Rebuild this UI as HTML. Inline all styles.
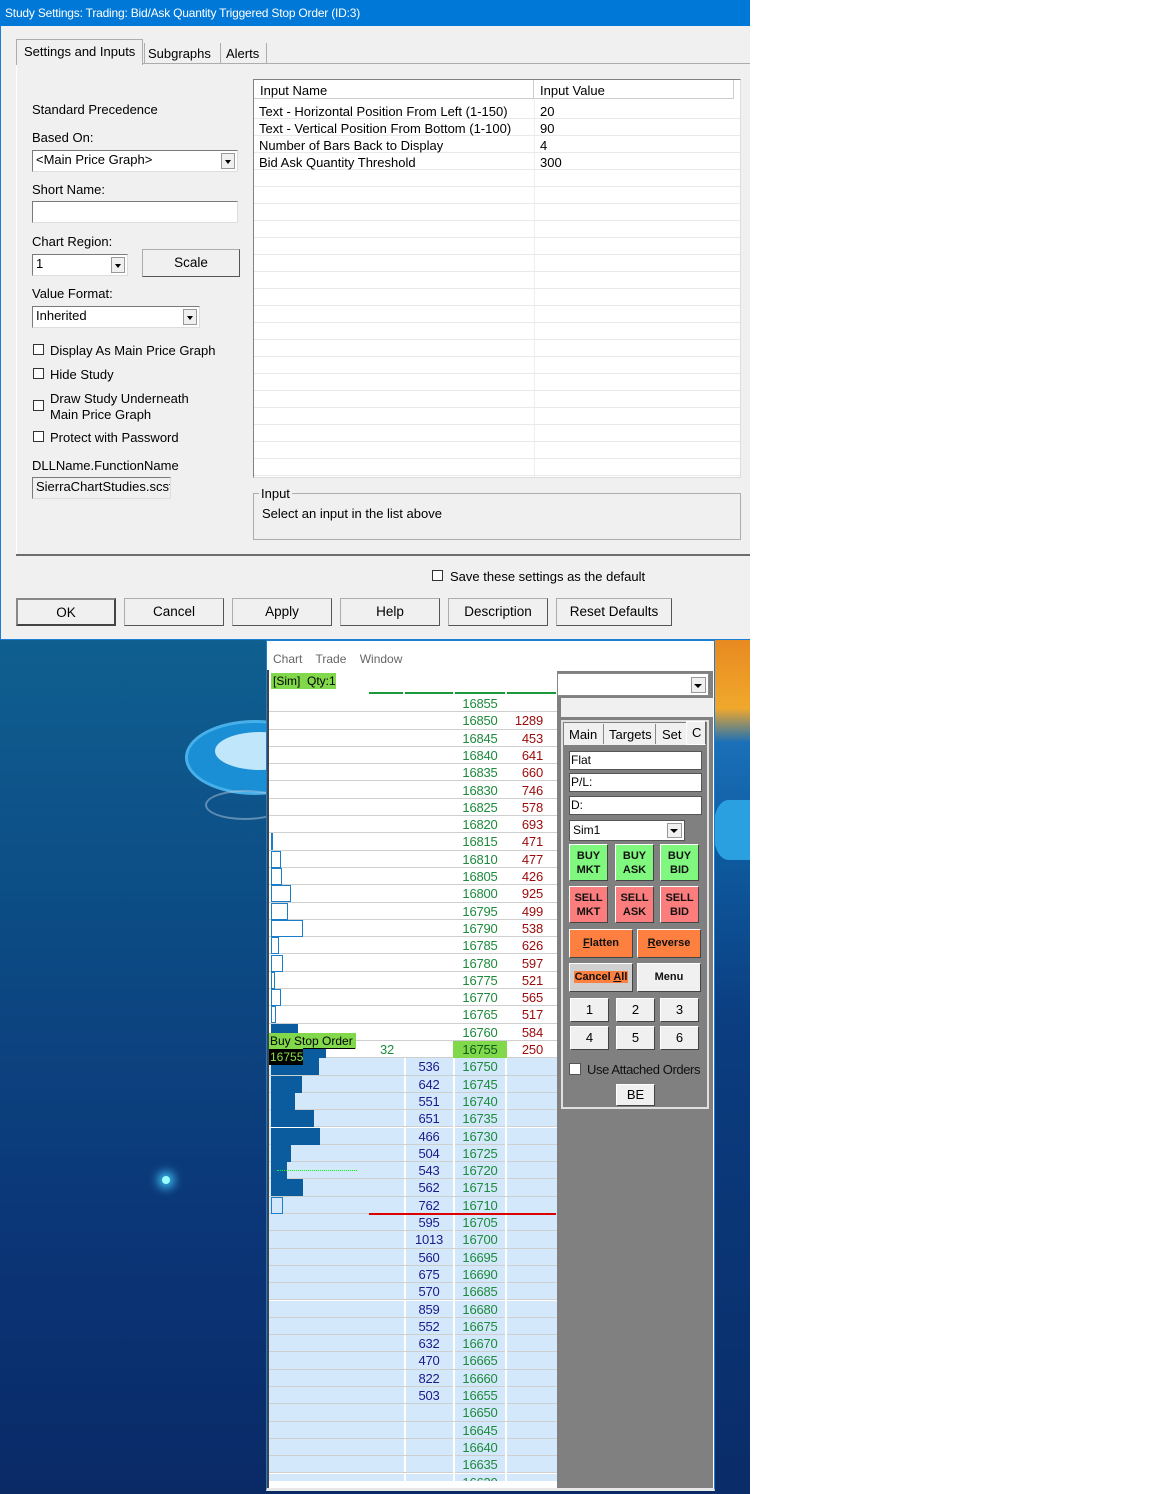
<!DOCTYPE html>
<html><head><meta charset="utf-8">
<style>
*{box-sizing:border-box;margin:0;padding:0}
body{width:1152px;height:1494px;background:#fff;position:relative;overflow:hidden;font-family:"Liberation Sans",sans-serif;}
.a{position:absolute}
.dlg{left:0;top:0;width:750px;height:640px;background:#f0f0f0;border-left:1px solid #1a7fd4;border-bottom:1px solid #1a7fd4}
.title{left:0;top:0;width:750px;height:26px;background:#0078d7;color:#fff;font-size:12px;line-height:26px;padding-left:5px;letter-spacing:-0.2px}
.t{font-size:13px;color:#000;letter-spacing:0;white-space:nowrap}
.cb{width:11px;height:11px;border:1px solid #333;background:#fff}
.btn{height:28px;border:1px solid #adadad;border-right-color:#555;border-bottom-color:#555;background:#f0f0f0;font-size:13.5px;text-align:center;line-height:26px}
.inp{background:#fff;border:1px solid #7a7a7a;border-right-color:#ddd;border-bottom-color:#ddd;font-size:13px;padding-left:3px;line-height:18px}
.dd{width:14px;height:16px;background:#f0f0f0;border:1px solid #999;position:absolute;right:1px;top:1px}
.dd:after{content:"";position:absolute;left:3px;top:6px;border:3.5px solid transparent;border-top:4px solid #000}
.bg{left:0;top:640px;width:750px;height:854px;background:linear-gradient(180deg,#0f5f90 0%,#0c4a84 35%,#0b3577 70%,#0a2a66 100%)}
.lad{left:269px;top:671px;width:288px;height:810px;background:#fff;overflow:hidden}
.row{position:absolute;left:0;width:288px;height:17.3px;border-bottom:1px solid #cfcfcf;font-size:13px;line-height:17px;letter-spacing:-0.2px}
.row span{position:absolute;top:0}
.p{left:184px;width:54px;text-align:center;color:#1d8a3c}
.ak{left:238px;width:36px;text-align:right;color:#9a0a0a}
.bd{left:136px;width:48px;text-align:center;color:#1a1a8a}
.blue{background:#d4e8fc}
.blue:before{content:"";position:absolute;left:135px;top:0;width:2px;height:100%;background:#fff}
.blue .p{border-left:2px solid #fff;border-right:2px solid #fff}
.ob{position:absolute;left:2px;top:0;height:17px;border:1px solid #1a7fc8;background:#fff}
.fb{position:absolute;left:2px;top:0;height:17px;background:#0b5c9e}
.gb{position:absolute;border:1px solid #fff;border-right-color:#444;border-bottom-color:#444;font-size:11px;font-weight:bold;text-align:center;line-height:14px;color:#111}
.nb{position:absolute;width:39px;height:24px;background:#f0f0f0;border:1px solid #fff;border-right-color:#444;border-bottom-color:#444;font-size:13px;text-align:center;line-height:22px}
.tf{position:absolute;left:8px;width:133px;height:19px;background:#fff;border:1px solid #555;font-size:12px;line-height:17px;padding-left:1px}
</style></head><body>

<div class="a bg"></div>
<div class="a" style="left:185px;top:720px;width:140px;height:75px;border-radius:50%;background:#1a8fd6;border:3px solid #48b0e8"></div>
<div class="a" style="left:215px;top:732px;width:90px;height:38px;border-radius:50%;background:#bfe6fb"></div>
<div class="a" style="left:205px;top:790px;width:80px;height:30px;border-radius:50%;border:2px solid rgba(180,200,220,.5)"></div>
<div class="a" style="left:162px;top:1176px;width:8px;height:8px;border-radius:50%;background:#9ff;box-shadow:0 0 10px 4px #4cf"></div>
<div class="a" style="left:714px;top:640px;width:36px;height:854px;background:linear-gradient(180deg,#e88a20 0%,#f0a82c 8%,#1a70b8 12%,#0e5a9e 25%,#0b3d80 45%,#0a2c68 100%)"></div>
<div class="a" style="left:714px;top:800px;width:36px;height:60px;background:#2aa0e0;border-radius:40% 0 0 40%"></div>

<div class="a dlg"></div>
<div class="a title">Study Settings: Trading: Bid/Ask Quantity Triggered Stop Order (ID:3)</div>
<div class="a" style="left:16px;top:63px;width:734px;height:1px;background:#adadad"></div>
<div class="a" style="left:16px;top:63px;width:1px;height:493px;background:#fff"></div>
<div class="a" style="left:16px;top:554px;width:734px;height:2px;background:#6d6d6d"></div>
<div class="a" style="left:16px;top:39px;width:127px;height:26px;background:#f0f0f0;border:1px solid #adadad;border-bottom:none"></div>
<div class="a t" style="left:24px;top:44px">Settings and Inputs</div>
<div class="a" style="left:144px;top:43px;width:1px;height:20px;background:#adadad"></div>
<div class="a t" style="left:148px;top:46px">Subgraphs</div>
<div class="a" style="left:220px;top:43px;width:1px;height:20px;background:#adadad"></div>
<div class="a t" style="left:226px;top:46px">Alerts</div>
<div class="a" style="left:266px;top:43px;width:1px;height:20px;background:#adadad"></div>

<div class="a t" style="left:32px;top:102px">Standard Precedence</div>
<div class="a t" style="left:32px;top:130px">Based On:</div>
<div class="a inp" style="left:32px;top:150px;width:206px;height:22px">&lt;Main Price Graph&gt;<div class="dd" style="top:2px;right:2px"></div></div>
<div class="a t" style="left:32px;top:182px">Short Name:</div>
<div class="a inp" style="left:32px;top:201px;width:206px;height:22px"></div>
<div class="a t" style="left:32px;top:234px">Chart Region:</div>
<div class="a inp" style="left:32px;top:254px;width:96px;height:22px">1<div class="dd" style="top:2px;right:2px"></div></div>
<div class="a btn" style="left:142px;top:249px;width:98px;height:28px">Scale</div>
<div class="a t" style="left:32px;top:286px">Value Format:</div>
<div class="a inp" style="left:32px;top:306px;width:168px;height:22px">Inherited<div class="dd" style="top:2px;right:2px"></div></div>
<div class="a cb" style="left:33px;top:344px"></div><div class="a t" style="left:50px;top:343px">Display As Main Price Graph</div>
<div class="a cb" style="left:33px;top:368px"></div><div class="a t" style="left:50px;top:367px">Hide Study</div>
<div class="a cb" style="left:33px;top:400px"></div><div class="a t" style="left:50px;top:391px;line-height:16px">Draw Study Underneath<br>Main Price Graph</div>
<div class="a cb" style="left:33px;top:431px"></div><div class="a t" style="left:50px;top:430px">Protect with Password</div>
<div class="a t" style="left:32px;top:458px">DLLName.FunctionName</div>
<div class="a inp" style="left:32px;top:477px;width:139px;height:22px;background:#f0f0f0;overflow:hidden;white-space:nowrap">SierraChartStudies.scsf</div>

<div class="a" style="left:253px;top:79px;width:488px;height:399px;background:#fff;border:1px solid #828282;border-right-color:#ddd;border-bottom-color:#ddd;overflow:hidden">
 <div class="a" style="left:0;top:0;width:480px;height:19px;border-bottom:1px solid #ccc;background:#fff"></div>
 <div class="a t" style="left:6px;top:3px">Input Name</div>
 <div class="a" style="left:279px;top:0;width:1px;height:19px;background:#ccc"></div>
 <div class="a t" style="left:286px;top:3px">Input Value</div>
 <div class="a" style="left:479px;top:0;width:1px;height:19px;background:#ccc"></div>
 <div class="a" style="left:280px;top:20px;width:1px;height:380px;background:#eee"></div>
 <div class="a" style="left:0;top:22px;width:486px;height:378px;background:repeating-linear-gradient(180deg,transparent 0,transparent 16px,#e9e9e9 16px,#e9e9e9 17px)"></div>
 <div class="a t" style="left:5px;top:24px">Text - Horizontal Position From Left (1-150)</div><div class="a t" style="left:286px;top:24px">20</div>
 <div class="a t" style="left:5px;top:41px">Text - Vertical Position From Bottom (1-100)</div><div class="a t" style="left:286px;top:41px">90</div>
 <div class="a t" style="left:5px;top:58px">Number of Bars Back to Display</div><div class="a t" style="left:286px;top:58px">4</div>
 <div class="a t" style="left:5px;top:75px">Bid Ask Quantity Threshold</div><div class="a t" style="left:286px;top:75px">300</div>
</div>
<div class="a" style="left:253px;top:493px;width:488px;height:47px;border:1px solid #adadad"></div>
<div class="a t" style="left:259px;top:486px;background:#f0f0f0;padding:0 2px">Input</div>
<div class="a t" style="left:262px;top:506px">Select an input in the list above</div>

<div class="a cb" style="left:432px;top:570px"></div>
<div class="a t" style="left:450px;top:569px">Save these settings as the default</div>
<div class="a btn" style="left:16px;top:598px;width:100px;border:2px solid #444;border-top-color:#888;border-left-color:#888">OK</div>
<div class="a btn" style="left:124px;top:598px;width:100px">Cancel</div>
<div class="a btn" style="left:232px;top:598px;width:100px">Apply</div>
<div class="a btn" style="left:340px;top:598px;width:100px">Help</div>
<div class="a btn" style="left:448px;top:598px;width:100px">Description</div>
<div class="a btn" style="left:556px;top:598px;width:116px">Reset Defaults</div>

<div class="a" style="left:266px;top:640px;width:449px;height:851px;background:#fff;border:1px solid #1a7fd4;border-bottom:3px solid #e8e8e8"></div>
<div class="a" style="left:273px;top:652px;font-size:12px;color:#666;word-spacing:10px">Chart Trade Window</div>
<div class="a" style="left:267px;top:670px;width:2px;height:818px;background:#444"></div>
<div class="a lad">
 <div class="a" style="left:2px;top:2px;width:65px;height:16px;background:#80d84a;font-size:12px;line-height:16px;padding-left:2px">[Sim]&nbsp; Qty:1</div>
 <div class="a" style="left:100px;top:21px;width:187px;height:2px;background:linear-gradient(90deg,#1a9a3a 0,#1a9a3a 34px,#fff 34px,#fff 36px,#1a9a3a 36px,#1a9a3a 84px,#fff 84px,#fff 86px,#1a9a3a 86px,#1a9a3a 136px,#fff 136px,#fff 138px,#1a9a3a 138px)"></div>
 <div class="a" style="left:0;top:24px;width:288px;height:800px">
  <div class="row" style="top:0"><span class="p">16855</span></div>
  <div class="row" style="top:17.3px"><span class="p">16850</span><span class="ak">1289</span></div>
  <div class="row" style="top:34.6px"><span class="p">16845</span><span class="ak">453</span></div>
  <div class="row" style="top:51.9px"><span class="p">16840</span><span class="ak">641</span></div>
  <div class="row" style="top:69.2px"><span class="p">16835</span><span class="ak">660</span></div>
  <div class="row" style="top:86.5px"><span class="p">16830</span><span class="ak">746</span></div>
  <div class="row" style="top:103.8px"><span class="p">16825</span><span class="ak">578</span></div>
  <div class="row" style="top:121.1px"><span class="p">16820</span><span class="ak">693</span></div>
  <div class="row" style="top:138.4px"><div class="ob" style="width:2px"></div><span class="p">16815</span><span class="ak">471</span></div>
  <div class="row" style="top:155.7px"><div class="ob" style="width:10px"></div><span class="p">16810</span><span class="ak">477</span></div>
  <div class="row" style="top:173px"><div class="ob" style="width:11px"></div><span class="p">16805</span><span class="ak">426</span></div>
  <div class="row" style="top:190.3px"><div class="ob" style="width:20px"></div><span class="p">16800</span><span class="ak">925</span></div>
  <div class="row" style="top:207.6px"><div class="ob" style="width:17px"></div><span class="p">16795</span><span class="ak">499</span></div>
  <div class="row" style="top:224.9px"><div class="ob" style="width:32px"></div><span class="p">16790</span><span class="ak">538</span></div>
  <div class="row" style="top:242.2px"><div class="ob" style="width:8px"></div><span class="p">16785</span><span class="ak">626</span></div>
  <div class="row" style="top:259.5px"><div class="ob" style="width:12px"></div><span class="p">16780</span><span class="ak">597</span></div>
  <div class="row" style="top:276.8px"><div class="ob" style="width:4px"></div><span class="p">16775</span><span class="ak">521</span></div>
  <div class="row" style="top:294.1px"><div class="ob" style="width:10px"></div><span class="p">16770</span><span class="ak">565</span></div>
  <div class="row" style="top:311.4px"><div class="ob" style="width:5px"></div><span class="p">16765</span><span class="ak">517</span></div>
  <div class="row" style="top:328.7px"><div class="fb" style="width:27px;height:10px"></div><span class="p">16760</span><span class="ak">584</span></div>
  <div class="row" style="top:346px"><div class="fb" style="width:55px;top:7px;height:11px"></div><span style="left:100px;width:36px;text-align:center;color:#1d8a3c">32</span><span class="p" style="background:#80d84a;color:#0a5a1a">16755</span><span class="ak">250</span></div>
  <div class="row blue" style="top:363.3px"><div class="fb" style="width:48px"></div><span class="bd">536</span><span class="p">16750</span></div>
  <div class="row blue" style="top:380.6px"><div class="fb" style="width:31px"></div><span class="bd">642</span><span class="p">16745</span></div>
  <div class="row blue" style="top:397.9px"><div class="fb" style="width:24px"></div><span class="bd">551</span><span class="p">16740</span></div>
  <div class="row blue" style="top:415.2px"><div class="fb" style="width:43px"></div><span class="bd">651</span><span class="p">16735</span></div>
  <div class="row blue" style="top:432.5px"><div class="fb" style="width:49px"></div><span class="bd">466</span><span class="p">16730</span></div>
  <div class="row blue" style="top:449.8px"><div class="fb" style="width:20px"></div><span class="bd">504</span><span class="p">16725</span></div>
  <div class="row blue" style="top:467.1px"><div class="fb" style="width:16px"></div><div style="position:absolute;left:8px;top:8px;width:80px;border-top:1px dotted #0f0"></div><span class="bd">543</span><span class="p">16720</span></div>
  <div class="row blue" style="top:484.4px"><div class="fb" style="width:32px"></div><span class="bd">562</span><span class="p">16715</span></div>
  <div class="row blue" style="top:501.7px"><div class="ob" style="width:12px;background:#d4e8fc"></div><span class="bd">762</span><span class="p">16710</span></div>
  <div class="row blue" style="top:519px"><span class="bd">595</span><span class="p">16705</span></div>
  <div class="row blue" style="top:536.3px"><span class="bd">1013</span><span class="p">16700</span></div>
  <div class="row blue" style="top:553.6px"><span class="bd">560</span><span class="p">16695</span></div>
  <div class="row blue" style="top:570.9px"><span class="bd">675</span><span class="p">16690</span></div>
  <div class="row blue" style="top:588.2px"><span class="bd">570</span><span class="p">16685</span></div>
  <div class="row blue" style="top:605.5px"><span class="bd">859</span><span class="p">16680</span></div>
  <div class="row blue" style="top:622.8px"><span class="bd">552</span><span class="p">16675</span></div>
  <div class="row blue" style="top:640.1px"><span class="bd">632</span><span class="p">16670</span></div>
  <div class="row blue" style="top:657.4px"><span class="bd">470</span><span class="p">16665</span></div>
  <div class="row blue" style="top:674.7px"><span class="bd">822</span><span class="p">16660</span></div>
  <div class="row blue" style="top:692px"><span class="bd">503</span><span class="p">16655</span></div>
  <div class="row blue" style="top:709.3px"><span class="p">16650</span></div>
  <div class="row blue" style="top:726.6px"><span class="p">16645</span></div>
  <div class="row blue" style="top:743.9px"><span class="p">16640</span></div>
  <div class="row blue" style="top:761.2px"><span class="p">16635</span></div>
  <div class="row blue" style="top:778.5px"><span class="p">16630</span></div>
  <div style="position:absolute;left:100px;top:518px;width:187px;height:2px;background:#d00;z-index:5"></div>
 </div>
 <div class="a" style="left:0;top:362px;width:87px;height:16px;background:#80d84a;font-size:12px;line-height:16px;padding-left:1px;color:#000">Buy Stop Order</div>
 <div class="a" style="left:0;top:378px;width:34px;height:16px;background:#000;color:#8ee04a;font-size:12px;line-height:16px;padding-left:1px">16755</div>
 <div class="a" style="left:34px;top:377px;width:52px;height:1px;background:#000"></div>
</div>

<div class="a" style="left:557px;top:671px;width:156px;height:817px;background:#808080"></div>
<div class="a" style="left:557px;top:673px;width:152px;height:23px;background:#fff;border:1px solid #888"><div style="position:absolute;right:2px;top:3px;width:15px;height:16px;background:#f0f0f0;border:1px solid #999"></div><div style="position:absolute;right:6px;top:10px;border:4px solid transparent;border-top:4px solid #000"></div></div>
<div class="a" style="left:561px;top:698px;width:152px;height:19px;background:#f0f0f0"></div>
<div class="a" style="left:561px;top:720px;width:148px;height:389px;border:2px solid #e0e0e0;background:#808080"></div>
<div class="a" style="left:564px;top:723px;width:138px;height:22px;background:#f0f0f0"></div>
<div class="a" style="left:569px;top:727px;font-size:13px">Main</div>
<div class="a" style="left:603px;top:724px;width:1px;height:20px;background:#888"></div>
<div class="a" style="left:609px;top:727px;font-size:13px">Targets</div>
<div class="a" style="left:655px;top:724px;width:1px;height:20px;background:#888"></div>
<div class="a" style="left:662px;top:727px;font-size:13px">Set</div>
<div class="a" style="left:686px;top:721px;width:20px;height:24px;background:#f0f0f0;border:1px solid #fff;border-right-color:#666"></div>
<div class="a" style="left:692px;top:725px;font-size:13px">C</div>
<div class="a" style="left:563px;top:745px;width:142px;height:362px">
 <div class="tf" style="left:6px;top:6px">Flat</div>
 <div class="tf" style="left:6px;top:28px">P/L:</div>
 <div class="tf" style="left:6px;top:51px">D:</div>
 <div class="tf" style="left:6px;top:75px;width:116px;height:21px;line-height:19px;padding-left:3px">Sim1<div style="position:absolute;right:2px;top:2px;width:15px;height:15px;background:#f0f0f0;border:1px solid #999"></div><div style="position:absolute;right:6px;top:8px;border:4px solid transparent;border-top:4px solid #000"></div></div>
 <div class="gb" style="left:6px;top:99px;width:39px;height:37px;background:#80f880;padding-top:4px">BUY<br>MKT</div>
 <div class="gb" style="left:52px;top:99px;width:39px;height:37px;background:#80f880;padding-top:4px">BUY<br>ASK</div>
 <div class="gb" style="left:97px;top:99px;width:39px;height:37px;background:#80f880;padding-top:4px">BUY<br>BID</div>
 <div class="gb" style="left:6px;top:141px;width:39px;height:37px;background:#fb7d7d;padding-top:4px">SELL<br>MKT</div>
 <div class="gb" style="left:52px;top:141px;width:39px;height:37px;background:#fb7d7d;padding-top:4px">SELL<br>ASK</div>
 <div class="gb" style="left:97px;top:141px;width:39px;height:37px;background:#fb7d7d;padding-top:4px">SELL<br>BID</div>
 <div class="gb" style="left:6px;top:184px;width:64px;height:29px;background:#fd8040;line-height:27px"><u>F</u>latten</div>
 <div class="gb" style="left:74px;top:184px;width:64px;height:29px;background:#fd8040;line-height:27px"><u>R</u>everse</div>
 <div class="gb" style="left:6px;top:218px;width:64px;height:29px;background:#d0d0d0;line-height:27px"><span style="background:#fd8040;padding:0 1px">Cancel <u>A</u>ll</span></div>
 <div class="gb" style="left:74px;top:218px;width:64px;height:29px;background:#f0f0f0;line-height:27px">Menu</div>
 <div class="nb" style="left:7px;top:253px">1</div>
 <div class="nb" style="left:53px;top:253px">2</div>
 <div class="nb" style="left:97px;top:253px">3</div>
 <div class="nb" style="left:7px;top:281px">4</div>
 <div class="nb" style="left:53px;top:281px">5</div>
 <div class="nb" style="left:97px;top:281px">6</div>
 <div class="a" style="left:6px;top:318px;width:12px;height:12px;background:#fff;border:1px solid #555"></div>
 <div class="a" style="left:24px;top:317px;font-size:13px;color:#111;letter-spacing:-0.4px;white-space:nowrap">Use Attached Orders</div>
 <div class="nb" style="left:53px;top:339px;height:22px;line-height:20px">BE</div>
</div>
</body></html>
